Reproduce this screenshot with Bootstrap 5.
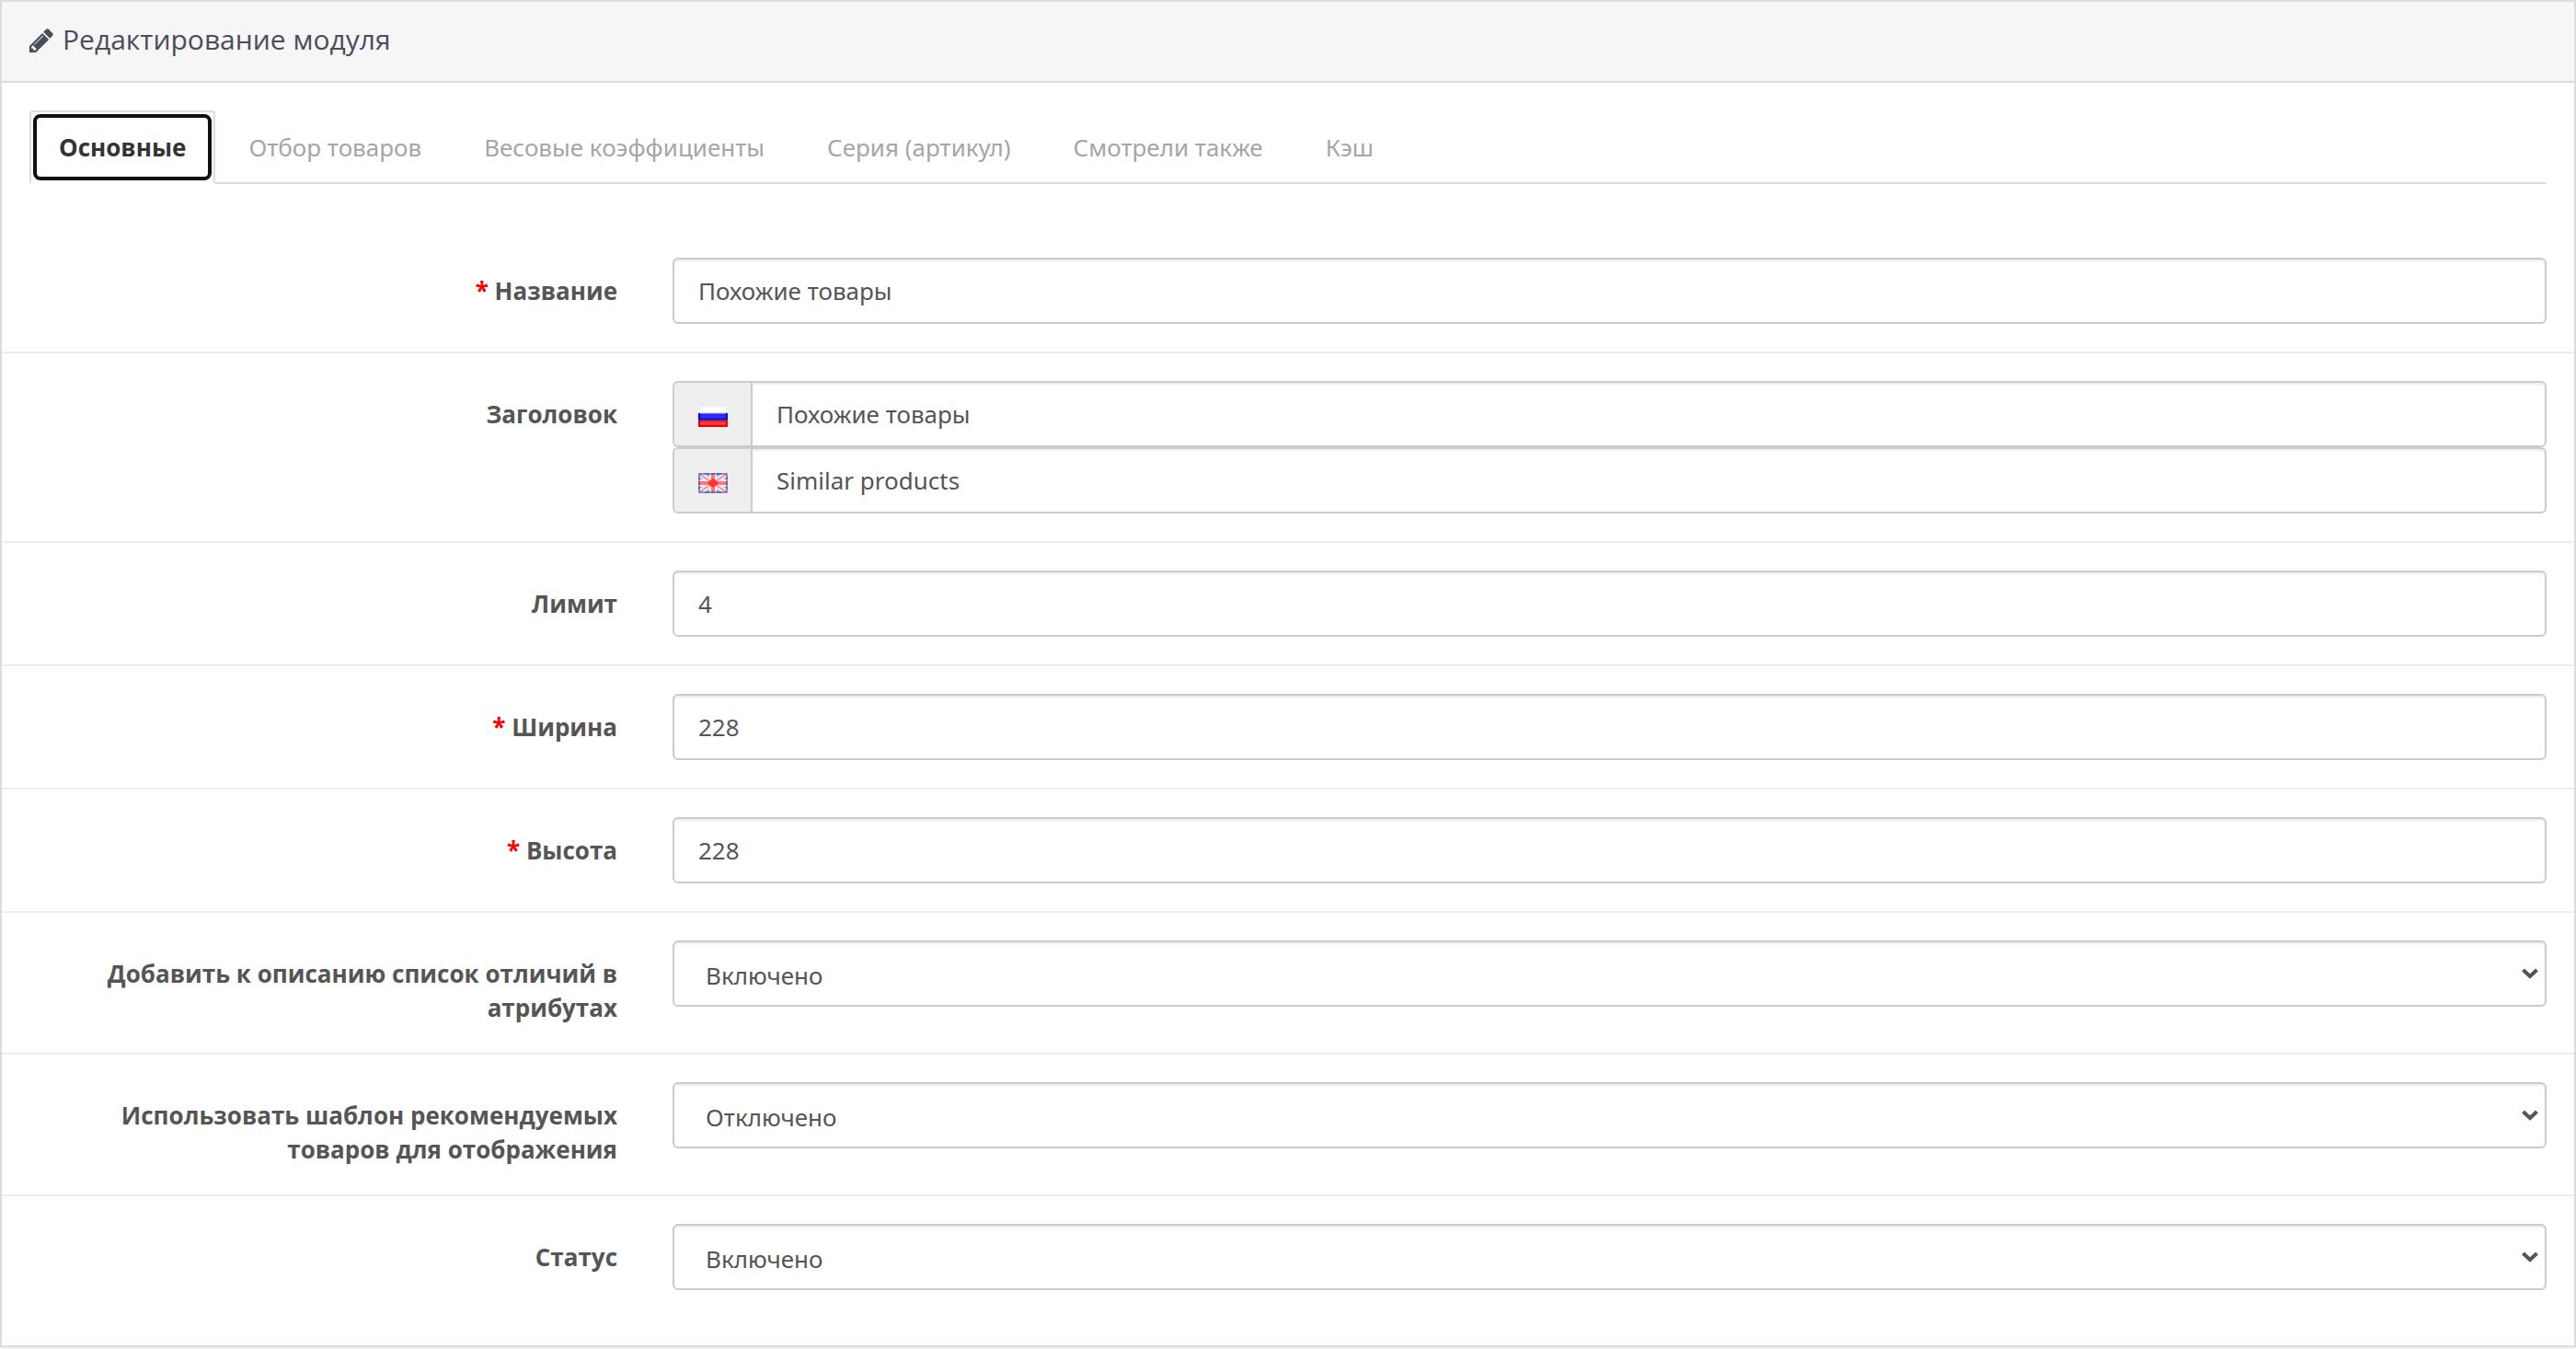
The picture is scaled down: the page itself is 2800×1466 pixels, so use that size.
<!DOCTYPE html>
<html lang="ru">
<head>
<meta charset="utf-8">
<meta name="viewport" content="width=device-width, initial-scale=1">
<title>Редактирование модуля</title>
<link href="https://cdn.jsdelivr.net/npm/bootstrap@5.3.0/dist/css/bootstrap.min.css" rel="stylesheet">
<style>
:root { --font-text: "Noto Sans", "Open Sans", sans-serif; --font-strong: "Open Sans", sans-serif; }
body { font-family: var(--font-text); font-size: 26px; line-height: 38px; color: #555; background: #fff; }
.module-panel { border: 2px solid #dcdcdc; border-radius: 0; box-shadow: 0 2px 2px rgba(0,0,0,.08); margin-bottom: 2px; }
.module-panel > .card-header { background: #f6f6f6; border-bottom: 2px solid #dcdcdc; border-radius: 0; padding: 22px 30px 26px; color: #4c4d5a; }
.module-title { font-family: var(--font-strong); font-size: 30px; line-height: 38px; font-weight: 400; gap: 10px; }
.module-title svg { margin-top: 2px; }
.module-panel > .card-body { padding: 30px; }
.nav-tabs { border-bottom: 2px solid #ddd; margin-bottom: 50px; gap: 4px; }
.nav-tabs .nav-link { position: relative; color: #a6a6a6; border: 2px solid transparent; border-radius: 4px 4px 0 0; padding: 20px 30px; line-height: 36px; margin-bottom: -2px; }
.nav-tabs .nav-link.active { font-family: var(--font-strong); color: #333; font-weight: 700; background: #fff; border-color: #ddd #ddd #fff; }
.nav-tabs .nav-link.active::after { content: ""; position: absolute; inset: 2px; border: 4px solid #101010; border-radius: 8px; }
.setting { --bs-gutter-x: 60px; margin-left: -30px; margin-right: -30px; padding: 30px 0; }
.setting + .setting { border-top: 2px solid #ededed; }
.setting .col-form-label { font-family: var(--font-strong); font-size: 26px; line-height: 37px; font-weight: 700; padding-top: 18px; padding-bottom: 0; text-align: right; }
.setting.required .col-form-label::before { content: "* "; color: #f00; }
.setting .form-control, .setting .form-select { height: 72px; font-size: 26px; line-height: 38px; color: #555; border: 2px solid #ccc; border-radius: 6px; padding: 14px 26px; background-color: #fff; box-shadow: inset 0 2px 2px rgba(0,0,0,.075); }
.setting .form-select { padding: 16px 34px 12px; background-image: url("data:image/svg+xml,%3Csvg xmlns='http://www.w3.org/2000/svg' viewBox='0 0 18 12'%3E%3Cpath d='M1.5 2L9 9L16.5 2' fill='none' stroke='%23555' stroke-width='4'/%3E%3C/svg%3E"); background-size: 18px 12px; background-position: right 7px center; }
.setting .input-group-text { background: #eee; border: 2px solid #ccc; border-right: 0; border-radius: 6px; padding: 6px 26px 0; }
.setting .input-group .form-control { border-radius: 0 6px 6px 0; margin-left: 0; }
</style>
</head>
<body>
<main class="card module-panel">
  <div class="card-header">
    <h1 class="module-title d-flex align-items-center mb-0">
      <svg width="26" height="26" viewBox="128 128 1536 1536" aria-hidden="true"><path fill="#4c4d5a" d="M491 1536l91-91-235-235-91 91v107h128v128h107zm523-928q0-22-22-22-10 0-17 7l-542 542q-7 7-7 17 0 22 22 22 10 0 17-7l542-542q7-7 7-17zm-54-192l416 416-832 832h-416v-416zm683 96q0 53-37 90l-166 166-416-416 166-165q36-38 90-38 53 0 91 38l235 234q37 39 37 91z"/></svg>
      <span>Редактирование модуля</span>
    </h1>
  </div>
  <div class="card-body">
    <ul class="nav nav-tabs">
      <li class="nav-item"><a class="nav-link active" href="#tab-general" aria-current="page">Основные</a></li>
      <li class="nav-item"><a class="nav-link" href="#tab-filter">Отбор товаров</a></li>
      <li class="nav-item"><a class="nav-link" href="#tab-weight">Весовые коэффициенты</a></li>
      <li class="nav-item"><a class="nav-link" href="#tab-series">Серия (артикул)</a></li>
      <li class="nav-item"><a class="nav-link" href="#tab-viewed">Смотрели также</a></li>
      <li class="nav-item"><a class="nav-link" href="#tab-cache">Кэш</a></li>
    </ul>
    <form id="tab-general">
      <div class="row setting required">
        <label class="col-3 col-form-label" for="input-name">Название</label>
        <div class="col-9"><input class="form-control" type="text" id="input-name" value="Похожие товары"></div>
      </div>
      <div class="row setting">
        <label class="col-3 col-form-label" for="input-title-ru">Заголовок</label>
        <div class="col-9">
          <div class="input-group">
            <span class="input-group-text">
              <svg width="32" height="22" viewBox="0 0 32 22" role="img" aria-label="Русский">
                <defs><linearGradient id="flagRu" x2="0" y2="1"><stop offset="0" stop-color="#f4f4f4"/><stop offset=".08" stop-color="#fff"/><stop offset=".24" stop-color="#fff"/><stop offset=".32" stop-color="#ccf"/><stop offset=".36" stop-color="#22e"/><stop offset=".5" stop-color="#33f"/><stop offset=".62" stop-color="#11d"/><stop offset=".7" stop-color="#d22"/><stop offset=".82" stop-color="#f44"/><stop offset="1" stop-color="#e00"/></linearGradient></defs>
                <path fill="url(#flagRu)" d="M0 0H32V22H0Z"/>
                <path fill="#f4f4f8" d="M0 0H2V6H0ZM30 0H32V6H30Z"/><path fill="#00e" d="M0 7H2V14H0ZM30 7H32V14H30Z"/><path fill="#e00" d="M0 15H2V20H30V15H32V22H0Z"/>
              </svg>
            </span>
            <input class="form-control" type="text" id="input-title-ru" value="Похожие товары">
          </div>
          <div class="input-group">
            <span class="input-group-text">
              <svg width="32" height="22" viewBox="0 0 32 22" role="img" aria-label="English">
                <path fill="#8ca2ec" d="M0 0H32V22H0Z"/>
                <path stroke="#f2edf8" stroke-width="6" d="M0 0 32 22M32 0 0 22"/>
                <path stroke="#f2edf8" stroke-width="8" d="M16 0V22M0 11H32"/>
                <path stroke="#f98f8f" stroke-width="2" d="M1 1 31 21M31 1 1 21"/>
                <path stroke="#f77" stroke-width="4" d="M16 0V22M0 11H32"/>
                <path fill="#f33" d="M16 6 19 8 22 11 19 14 16 16 13 14 10 11 13 8Z"/>
                <path fill="none" stroke="#1c2c80" stroke-opacity=".45" stroke-width="2" d="M1 1H31V21H1Z"/>
              </svg>
            </span>
            <input class="form-control" type="text" id="input-title-en" aria-label="Заголовок (English)" value="Similar products">
          </div>
        </div>
      </div>
      <div class="row setting">
        <label class="col-3 col-form-label" for="input-limit">Лимит</label>
        <div class="col-9"><input class="form-control" type="text" id="input-limit" value="4"></div>
      </div>
      <div class="row setting required">
        <label class="col-3 col-form-label" for="input-width">Ширина</label>
        <div class="col-9"><input class="form-control" type="text" id="input-width" value="228"></div>
      </div>
      <div class="row setting required">
        <label class="col-3 col-form-label" for="input-height">Высота</label>
        <div class="col-9"><input class="form-control" type="text" id="input-height" value="228"></div>
      </div>
      <div class="row setting">
        <label class="col-3 col-form-label" for="input-diff">Добавить к описанию список отличий в атрибутах</label>
        <div class="col-9"><select class="form-select" id="input-diff"><option selected>Включено</option><option>Отключено</option></select></div>
      </div>
      <div class="row setting">
        <label class="col-3 col-form-label" for="input-template">Использовать шаблон рекомендуемых товаров для отображения</label>
        <div class="col-9"><select class="form-select" id="input-template"><option>Включено</option><option selected>Отключено</option></select></div>
      </div>
      <div class="row setting">
        <label class="col-3 col-form-label" for="input-status">Статус</label>
        <div class="col-9"><select class="form-select" id="input-status"><option selected>Включено</option><option>Отключено</option></select></div>
      </div>
    </form>
  </div>
</main>
<script src="https://cdn.jsdelivr.net/npm/bootstrap@5.3.0/dist/js/bootstrap.bundle.min.js"></script>
</body>
</html>
